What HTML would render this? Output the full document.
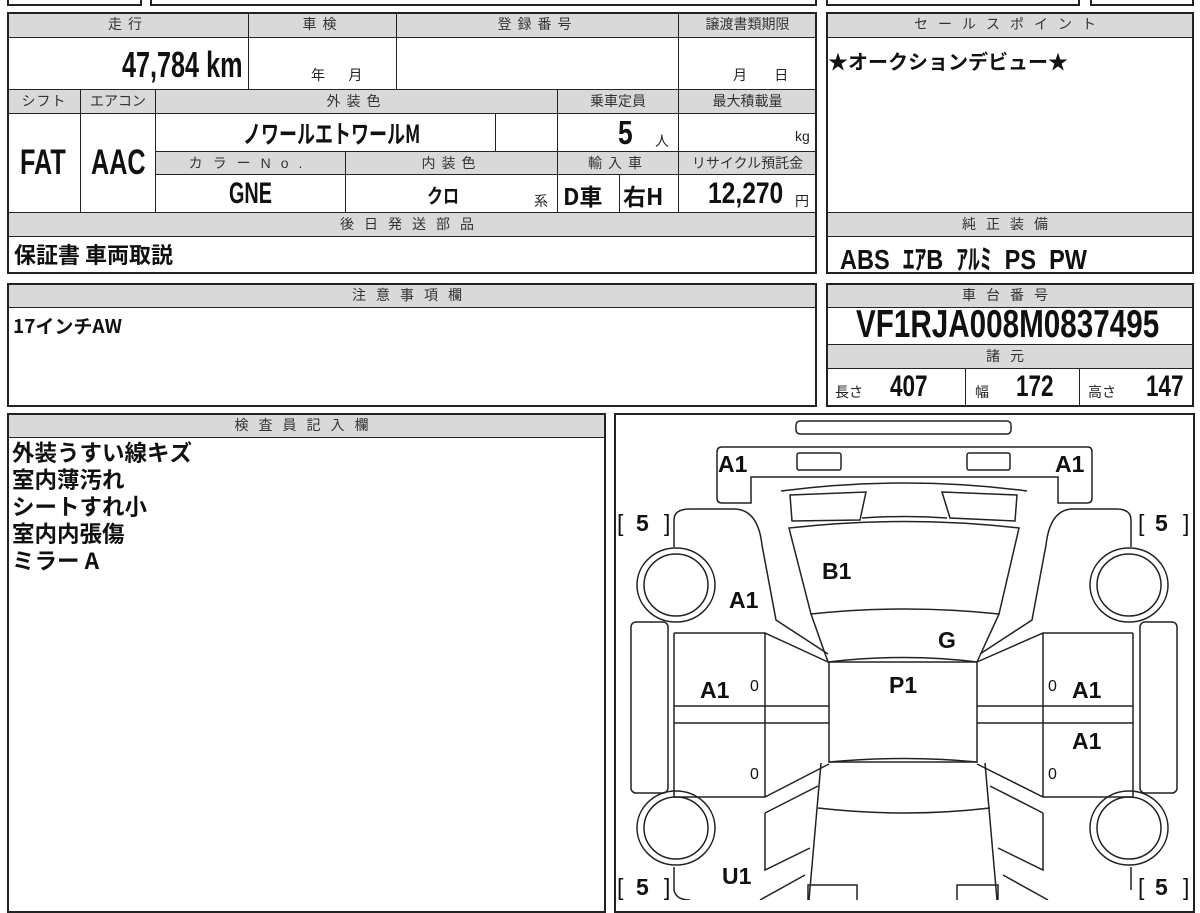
<!DOCTYPE html>
<html><head><meta charset="utf-8"><style>
*{margin:0;padding:0;box-sizing:border-box}
body{width:1200px;height:900px;background:#fff;position:relative;overflow:hidden;font-family:"Liberation Sans","Noto Sans CJK JP",sans-serif;color:#111}
.c{position:absolute;border:1px solid #222}
.g{background:#d9d9d9;font-size:14px;text-align:center;letter-spacing:6px;line-height:22px;color:#333}
.o{position:absolute;border:2px solid #222}
.v{position:absolute;font-weight:bold;font-family:"Liberation Sans","Noto Sans CJK JP",sans-serif;white-space:nowrap;transform-origin:left top}
.j{position:absolute;font-weight:bold;font-family:"Noto Sans CJK JP",sans-serif;white-space:nowrap}
.s{position:absolute;font-size:14px;color:#222;white-space:nowrap}
</style></head><body>
<div class="o" style="left:7px;top:-10px;width:135px;height:16px"></div>
<div class="o" style="left:150px;top:-10px;width:667px;height:16px"></div>
<div class="o" style="left:826px;top:-10px;width:254px;height:16px"></div>
<div class="o" style="left:1090px;top:-10px;width:104px;height:16px"></div>

<div class="c g" style="left:7px;top:12px;width:242px;height:26px">走行</div>
<div class="c g" style="left:248px;top:12px;width:149px;height:26px">車検</div>
<div class="c g" style="left:396px;top:12px;width:283px;height:26px">登録番号</div>
<div class="c g" style="left:678px;top:12px;width:139px;height:26px;letter-spacing:0">譲渡書類期限</div>
<div class="c" style="left:7px;top:37px;width:242px;height:53px"></div>
<div class="c" style="left:248px;top:37px;width:149px;height:53px"></div>
<div class="c" style="left:396px;top:37px;width:283px;height:53px"></div>
<div class="c" style="left:678px;top:37px;width:139px;height:53px"></div>
<div class="v" style="left:122px;top:44px;font-size:36px;transform:scaleX(.7)">47,784 km</div>
<div class="s" style="left:311px;top:65px">年&nbsp;&nbsp;&nbsp;&nbsp;&nbsp;&nbsp;月</div>
<div class="s" style="left:733px;top:65px">月&nbsp;&nbsp;&nbsp;&nbsp;&nbsp;&nbsp;&nbsp;日</div>

<div class="c g" style="left:7px;top:89px;width:74px;height:25px;letter-spacing:1px">シフト</div>
<div class="c g" style="left:80px;top:89px;width:76px;height:25px;letter-spacing:0">エアコン</div>
<div class="c g" style="left:155px;top:89px;width:403px;height:25px">外装色</div>
<div class="c g" style="left:557px;top:89px;width:122px;height:25px;letter-spacing:0">乗車定員</div>
<div class="c g" style="left:678px;top:89px;width:139px;height:25px;letter-spacing:0">最大積載量</div>
<div class="c" style="left:7px;top:113px;width:74px;height:100px"></div>
<div class="c" style="left:80px;top:113px;width:76px;height:100px"></div>
<div class="c" style="left:155px;top:113px;width:341px;height:39px"></div>
<div class="c" style="left:495px;top:113px;width:63px;height:39px"></div>
<div class="c" style="left:557px;top:113px;width:122px;height:39px"></div>
<div class="c" style="left:678px;top:113px;width:139px;height:39px"></div>
<div class="v" style="left:20px;top:143px;font-size:35px;transform:scaleX(.72)">FAT</div>
<div class="v" style="left:91px;top:143px;font-size:35px;transform:scaleX(.72)">AAC</div>
<div class="v" style="left:243px;top:115px;font-size:25px;font-family:'Noto Sans CJK JP',sans-serif;transform:scaleX(.72)">ノワールエトワールM</div>
<div class="v" style="left:618px;top:114px;font-size:33px;transform:scaleX(.8)">5</div>
<div class="s" style="left:655px;top:131px">人</div>
<div class="s" style="left:795px;top:128px">kg</div>
<div class="c g" style="left:155px;top:151px;width:191px;height:24px;letter-spacing:10px">カラーNo.</div>
<div class="c g" style="left:345px;top:151px;width:213px;height:24px">内装色</div>
<div class="c g" style="left:557px;top:151px;width:122px;height:24px">輸入車</div>
<div class="c g" style="left:678px;top:151px;width:139px;height:24px;letter-spacing:0">リサイクル預託金</div>
<div class="c" style="left:155px;top:174px;width:191px;height:39px"></div>
<div class="c" style="left:345px;top:174px;width:213px;height:39px"></div>
<div class="c" style="left:557px;top:174px;width:63px;height:39px"></div>
<div class="c" style="left:619px;top:174px;width:60px;height:39px"></div>
<div class="c" style="left:678px;top:174px;width:139px;height:39px"></div>
<div class="v" style="left:229px;top:177px;font-size:30px;transform:scaleX(.66)">GNE</div>
<div class="j" style="left:423px;top:180px;font-size:20px;transform:scaleX(.8)">クロ</div>
<div class="s" style="left:534px;top:191px">系</div>
<div class="j" style="left:563px;top:178px;font-size:23px">D車</div>
<div class="j" style="left:623px;top:178px;font-size:23px">右H</div>
<div class="v" style="left:708px;top:177px;font-size:30px;transform:scaleX(.82)">12,270</div>
<div class="s" style="left:795px;top:191px">円</div>
<div class="c g" style="left:7px;top:212px;width:810px;height:25px;letter-spacing:10px">後日発送部品</div>
<div class="c" style="left:7px;top:236px;width:810px;height:37px"></div>
<div class="j" style="left:14px;top:238px;font-size:22px">保証書 車両取説</div>
<div class="o" style="left:7px;top:12px;width:810px;height:262px;background:none"></div>

<div class="c g" style="left:826px;top:12px;width:368px;height:26px;letter-spacing:10px">セールスポイント</div>
<div class="c" style="left:826px;top:37px;width:368px;height:176px"></div>
<div class="j" style="left:828px;top:46px;font-size:20px">★オークションデビュー★</div>
<div class="c g" style="left:826px;top:212px;width:368px;height:25px;letter-spacing:10px">純正装備</div>
<div class="c" style="left:826px;top:236px;width:368px;height:37px"></div>
<div class="v" style="left:840px;top:238px;font-size:28px;transform:scaleX(.84)">ABS&nbsp; ｴｱB&nbsp; ｱﾙﾐ&nbsp; PS&nbsp; PW</div>
<div class="o" style="left:826px;top:12px;width:368px;height:262px"></div>

<div class="c g" style="left:7px;top:283px;width:810px;height:25px;letter-spacing:10px">注意事項欄</div>
<div class="c" style="left:7px;top:307px;width:810px;height:99px"></div>
<div class="j" style="left:13px;top:312px;font-size:19px">17インチAW</div>
<div class="o" style="left:7px;top:283px;width:810px;height:124px"></div>

<div class="c g" style="left:826px;top:283px;width:368px;height:25px;letter-spacing:10px">車台番号</div>
<div class="c" style="left:826px;top:307px;width:368px;height:38px"></div>
<div class="v" style="left:856px;top:303px;font-size:39px;transform:scaleX(.76)">VF1RJA008M0837495</div>
<div class="c g" style="left:826px;top:344px;width:368px;height:25px;letter-spacing:10px">諸元</div>
<div class="c" style="left:826px;top:368px;width:140px;height:38px"></div>
<div class="c" style="left:965px;top:368px;width:115px;height:38px"></div>
<div class="c" style="left:1079px;top:368px;width:115px;height:38px"></div>
<div class="s" style="left:835px;top:382px">長さ</div><div class="v" style="left:890px;top:370px;font-size:30px;transform:scaleX(.75)">407</div>
<div class="s" style="left:975px;top:382px">幅</div><div class="v" style="left:1016px;top:370px;font-size:30px;transform:scaleX(.75)">172</div>
<div class="s" style="left:1088px;top:382px">高さ</div><div class="v" style="left:1146px;top:370px;font-size:30px;transform:scaleX(.75)">147</div>
<div class="o" style="left:826px;top:283px;width:368px;height:124px"></div>

<div class="c g" style="left:7px;top:413px;width:599px;height:25px;letter-spacing:10px">検査員記入欄</div>
<div class="o" style="left:7px;top:413px;width:599px;height:500px"></div>
<div class="j" style="left:12px;top:439px;font-size:22.5px;line-height:27px">外装うすい線キズ<br>室内薄汚れ<br>シートすれ小<br>室内内張傷<br>ミラー A</div>

<div class="o" style="left:614px;top:413px;width:581px;height:500px"></div>
<svg style="position:absolute;left:0;top:0" width="1200" height="900" fill="none" stroke="#222" stroke-width="1.5">
<rect x="796" y="421" width="215" height="13" rx="4"/>
<path d="M722 447 H1088 Q1092 447 1092 452 V498 Q1092 503 1087 503 H1058 V477 H751 V503 H722 Q717 503 717 498 V452 Q717 447 722 447Z"/>
<rect x="797" y="453" width="44" height="17" rx="2"/><rect x="967" y="453" width="43" height="17" rx="2"/>
<path d="M781 491 Q905 475 1027 491 M790 495 L866 492 L860 520 L792 521Z M942 492 L1017 495 L1015 521 L950 518Z M862 518 Q905 515 947 518"/>
<path d="M789 528 Q905 515 1019 528 L999 614 Q905 604 811 614Z"/>
<path d="M811 614 L828 662 Q905 653 977 662 L999 614"/>
<rect x="829" y="662" width="148" height="100"/>
<path d="M829 762 Q905 755 977 762 M821 763 L809 900 M985 763 L997 900 M818 808 Q905 818 990 808"/>
<path d="M674 547 V520 Q674 509 690 509 H735 Q758 510 762 545 L776 620 L828 654"/>
<path d="M1131 547 V520 Q1131 509 1116 509 H1072 Q1050 510 1046 545 L1032 620 L980 654"/>
<ellipse cx="676" cy="585" rx="39" ry="37"/><ellipse cx="676" cy="585" rx="32" ry="31"/>
<ellipse cx="1129" cy="585" rx="39" ry="37"/><ellipse cx="1129" cy="585" rx="32" ry="31"/>
<ellipse cx="676" cy="828" rx="39" ry="37"/><ellipse cx="676" cy="828" rx="32" ry="31"/>
<ellipse cx="1129" cy="828" rx="39" ry="37"/><ellipse cx="1129" cy="828" rx="32" ry="31"/>
<rect x="631" y="622" width="37" height="171" rx="5"/><rect x="1140" y="622" width="37" height="171" rx="5"/>
<path d="M674 633 H765 L828 662 M674 706 H829 M674 723 H829 M765 633 V797 M674 797 H765 L829 764 M674 633 V797"/>
<path d="M1133 633 H1043 L977 662 M1133 706 H977 M1133 723 H977 M1043 633 V797 M1133 797 H1043 L977 764 M1133 633 V797"/>
<path d="M765 813 L818 786 M765 813 V870 L810 848 M674 867 V890 Q676 900 690 900 M760 900 L805 875"/>
<path d="M1043 813 L990 786 M1043 813 V870 L998 848 M1131 867 V890 M1048 900 L1003 875"/>
<path d="M808 900 V885 H857 V900 M957 900 V885 H998 V900"/>
</svg>
<div style="position:absolute;font:bold 23px 'Liberation Sans',sans-serif;color:#111">
<span style="position:absolute;left:718px;top:451px">A1</span>
<span style="position:absolute;left:1055px;top:451px">A1</span>
<span style="position:absolute;left:617px;top:510px;font-weight:normal">[</span><span style="position:absolute;left:636px;top:510px">5</span><span style="position:absolute;left:664px;top:510px;font-weight:normal">]</span>
<span style="position:absolute;left:1138px;top:510px;font-weight:normal">[</span><span style="position:absolute;left:1155px;top:510px">5</span><span style="position:absolute;left:1183px;top:510px;font-weight:normal">]</span>
<span style="position:absolute;left:617px;top:874px;font-weight:normal">[</span><span style="position:absolute;left:636px;top:874px">5</span><span style="position:absolute;left:664px;top:874px;font-weight:normal">]</span>
<span style="position:absolute;left:1138px;top:874px;font-weight:normal">[</span><span style="position:absolute;left:1155px;top:874px">5</span><span style="position:absolute;left:1183px;top:874px;font-weight:normal">]</span>
<span style="position:absolute;left:822px;top:558px">B1</span>
<span style="position:absolute;left:729px;top:587px">A1</span>
<span style="position:absolute;left:938px;top:627px">G</span>
<span style="position:absolute;left:889px;top:672px">P1</span>
<span style="position:absolute;left:700px;top:677px">A1</span>
<span style="position:absolute;left:1072px;top:677px">A1</span>
<span style="position:absolute;left:1072px;top:728px">A1</span>
<span style="position:absolute;left:722px;top:863px">U1</span>
<span style="position:absolute;left:750px;top:678px;font-size:16px;font-weight:normal">0</span>
<span style="position:absolute;left:750px;top:766px;font-size:16px;font-weight:normal">0</span>
<span style="position:absolute;left:1048px;top:678px;font-size:16px;font-weight:normal">0</span>
<span style="position:absolute;left:1048px;top:766px;font-size:16px;font-weight:normal">0</span>
</div>
</body></html>
